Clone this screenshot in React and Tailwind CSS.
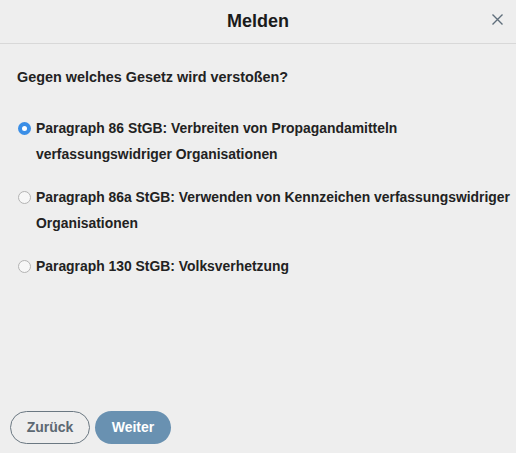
import { useState } from "react";

const options = [
    "Paragraph 86 StGB: Verbreiten von Propagandamitteln verfassungswidriger Organisationen",
    "Paragraph 86a StGB: Verwenden von Kennzeichen verfassungswidriger Organisationen",
    "Paragraph 130 StGB: Volksverhetzung",
];

const App = () => {
    const [selected, setSelected] = useState(0);

    return (
        <div className="w-[516px] h-[453px] bg-[#eeeeee] flex flex-col font-['Liberation_Sans',Arial,sans-serif] text-[#222222]">
            <div className="h-[44px] shrink-0 border-b border-[#d8d8d8] flex items-center justify-center relative">
                <h1 className="text-[18px] font-bold text-[#1a1a1a]">Melden</h1>
                <button className="absolute right-[12px] top-[13px] w-[13px] h-[13px] flex items-center justify-center">
                    <svg width="13" height="13" viewBox="0 0 13 13" fill="none" stroke="#5f6e7b" strokeWidth="1.4">
                        <path d="M1.5 1.5 L11.5 11.5 M11.5 1.5 L1.5 11.5" />
                    </svg>
                </button>
            </div>

            <div className="pl-[17px]">
                <p className="mt-[23px] text-[14.4px] leading-[20px] font-bold">Gegen welches Gesetz wird verstoßen?</p>

                <div className="mt-[28px] flex flex-col gap-[17px]">
                    {options.map((opt, i) => (
                        <label key={i} className="flex items-start cursor-pointer" onClick={() => setSelected(i)}>
                            <span className="w-[19px] h-[26px] shrink-0 flex items-center">
                                {selected === i ? (
                                    <span className="w-[13px] h-[13px] ml-[1px] rounded-full bg-[#3a8ee6] flex items-center justify-center">
                                        <span className="w-[5px] h-[5px] rounded-full bg-white"></span>
                                    </span>
                                ) : (
                                    <span className="w-[13px] h-[13px] ml-[1px] rounded-full border border-[#b3b3b3] bg-[#f7f7f7]"></span>
                                )}
                            </span>
                            <span className="text-[13.9px] leading-[26px] font-bold">{opt}</span>
                        </label>
                    ))}
                </div>
            </div>

            <div className="mt-auto pl-[10px] pb-[9px] flex gap-[5px]">
                <button className="h-[33px] w-[80px] rounded-full border border-[#6b7882] text-[#5c6872] text-[14px] font-bold">Zurück</button>
                <button className="h-[33px] w-[76px] rounded-full bg-[#6991b1] text-white text-[14px] font-bold">Weiter</button>
            </div>
        </div>
    );
};

export default App;
